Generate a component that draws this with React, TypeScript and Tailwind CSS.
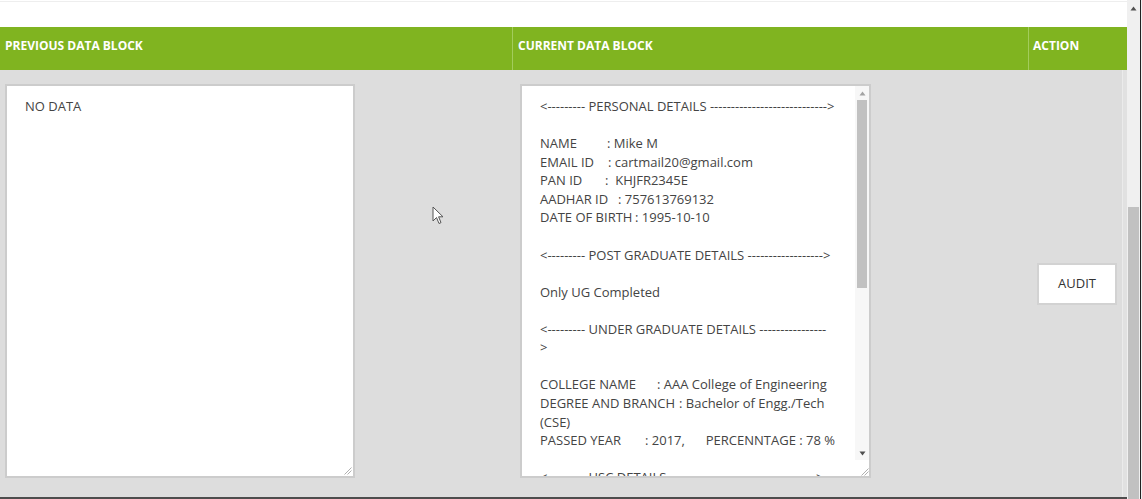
import React from 'react';

function Tri({ up, color }: { up?: boolean; color: string }) {
  return (
    <svg width="7" height="5" viewBox="0 0 7 5">
      <polygon points={up ? '3.5,0.5 6.5,4.5 0.5,4.5' : '0.5,0.5 6.5,0.5 3.5,4.5'} fill={color} />
    </svg>
  );
}

function Grip() {
  return (
    <svg width="9" height="9" viewBox="0 0 9 9">
      <line x1="8.5" y1="1.5" x2="1.5" y2="8.5" stroke="#b0b0b0" strokeWidth="1" />
      <line x1="8.5" y1="4.5" x2="4.5" y2="8.5" stroke="#b0b0b0" strokeWidth="1" />
    </svg>
  );
}

function Cursor() {
  return (
    <svg width="12" height="19" viewBox="0 0 12 19" className="absolute left-[432px] top-[136px]">
      <path d="M1 1 L1 15 L4.5 11.5 L7 17.5 L9 16.6 L6.6 10.8 L11 10.8 Z" fill="#fff" stroke="#555" strokeWidth="1" strokeLinejoin="round" />
    </svg>
  );
}

export default function App() {
  return (
    <div className="w-[1142px] h-[499px] flex bg-white overflow-hidden font-['Open_Sans',sans-serif] text-[#444]">
      <div className="w-[1127px] flex flex-col">
        <div className="h-[26px] border-t border-[#eeeeee] mt-[1px]" />
        <div className="flex h-[43px] bg-[#80b420] text-white text-[12px] font-bold leading-[16px]">
          <div className="w-[512px] pl-[5px] pt-[11px]">PREVIOUS DATA BLOCK</div>
          <div className="w-[516px] border-l border-[#a3cc5c] pl-[5px] pt-[11px]">CURRENT DATA BLOCK</div>
          <div className="flex-1 border-l border-[#a3cc5c] pl-[4px] pt-[11px]">ACTION</div>
        </div>

        <div className="relative flex-1 flex bg-[#dddddd] text-[13px] leading-[18.57px]">
          <div className="w-[512px] pl-[5px] pt-[14px]">
            <div className="relative w-[350px] h-[394px] bg-white border-2 border-[#cccccc] pl-[18px] pt-[11px]">
              NO DATA
              <div className="absolute right-[1px] bottom-[1px]">
                <Grip />
              </div>
            </div>
          </div>

          <div className="w-[516px] pl-[8px] pt-[14px]">
            <div className="w-[351px] h-[394px] bg-white border-2 border-[#cccccc] flex">
              <div className="flex-1 overflow-hidden pl-[18px] pt-[11px] whitespace-pre">
                <div>{'<--------- PERSONAL DETAILS ---------------------------->'}</div>
                <div>&nbsp;</div>
                <div><span className="inline-block w-[67px]">NAME</span>: Mike M</div>
                <div><span className="inline-block w-[68px]">EMAIL ID</span>: cartmail20@gmail.com</div>
                <div><span className="inline-block w-[65px]">PAN ID</span>:  KHJFR2345E</div>
                <div><span className="inline-block w-[78px]">AADHAR ID</span>: 757613769132</div>
                <div><span className="inline-block w-[95px]">DATE OF BIRTH</span>: 1995-10-10</div>
                <div>&nbsp;</div>
                <div>{'<--------- POST GRADUATE DETAILS ------------------>'}</div>
                <div>&nbsp;</div>
                <div>Only UG Completed</div>
                <div>&nbsp;</div>
                <div>{'<--------- UNDER GRADUATE DETAILS ----------------'}</div>
                <div>{'>'}</div>
                <div>&nbsp;</div>
                <div><span className="inline-block w-[117px]">COLLEGE NAME</span>: AAA College of Engineering</div>
                <div><span className="inline-block w-[139px]">DEGREE AND BRANCH</span>: Bachelor of Engg./Tech</div>
                <div>(CSE)</div>
                <div>
                  <span className="inline-block w-[105px]">PASSED YEAR</span>: <span className="inline-block w-[54px]">2017,</span>PERCENNTAGE : 78 %
                </div>
                <div>&nbsp;</div>
                <div>{'<--------- HSC DETAILS ----------------------------------->'}</div>
              </div>
              <div className="w-[14px] flex flex-col bg-[#f7f7f7]">
                <div className="h-[14px] flex items-center justify-center">
                  <Tri up color="#a3a3a3" />
                </div>
                <div className="h-[188px] mx-[2px] bg-[#c1c1c1]" />
                <div className="flex-1" />
                <div className="h-[14px] flex items-center justify-center">
                  <Tri color="#505050" />
                </div>
                <div className="h-[16px] flex items-end justify-end bg-white">
                  <Grip />
                </div>
              </div>
            </div>
          </div>

          <div className="flex-1 flex items-center pl-[9px]">
            <button className="w-[80px] h-[42px] bg-white border-2 border-[#d2d2d2] text-[13px] text-[#333]">
              AUDIT
            </button>
          </div>
          <div className="w-[5px] border-l border-[#ebebeb] bg-[#e1e1e1]" />

          <Cursor />
        </div>
        <div className="h-[2px] bg-[#4d4d4d]" />
      </div>

      <div className="w-[15px] flex">
        <div className="w-[13px] flex flex-col bg-[#f0f0f0]">
          <div className="h-[16px] flex items-center justify-center">
            <Tri up color="#505050" />
          </div>
          <div className="h-[191px]" />
          <div className="flex-1 mx-[1px] bg-[#c1c1c1]" />
        </div>
        <div className="w-[1px] bg-[#222222]" />
        <div className="w-[1px] bg-[#f0f0f0]" />
      </div>
    </div>
  );
}
